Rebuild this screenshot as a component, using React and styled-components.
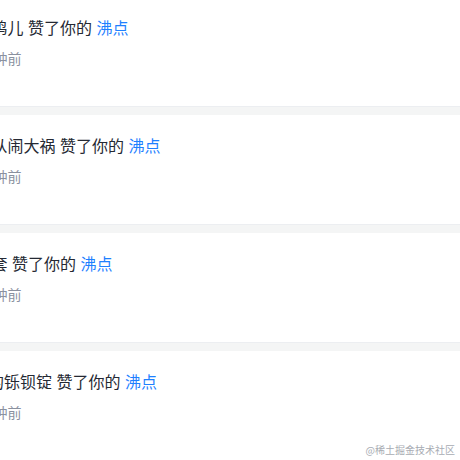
import styled, { createGlobalStyle } from 'styled-components';

const GlobalStyle = createGlobalStyle`
    html, body {
        margin: 0;
        padding: 0;
        background: #ffffff;
    }
    body {
        font-family: "Liberation Sans", "Noto Sans CJK SC", sans-serif;
    }
`

const Viewport = styled.div`
    position: relative;
    width: 460px;
    height: 460px;
    overflow: hidden;
    background: #f4f5f5;
`

const List = styled.ul`
    list-style: none;
    margin: -3px 0 0 -36px;
    padding: 0;
    display: flex;
    flex-direction: column;
    gap: 8px;
`

const Card = styled.li`
    height: 110px;
    box-sizing: border-box;
    padding: 20px 20px 0 0;
    background: #ffffff;
    border-bottom: 1px solid #eceef1;
    display: flex;
    flex-direction: column;
    gap: 8px;
`

const Message = styled.div`
    font-size: 16px;
    line-height: 24px;
    color: #252933;
    white-space: nowrap;
`

const Link = styled.a`
    color: #1e80ff;
    text-decoration: none;
`

const Time = styled.div`
    font-size: 14px;
    line-height: 20px;
    color: #8a919f;
`

const Watermark = styled.span`
    position: absolute;
    right: 5px;
    bottom: 3px;
    font-size: 10px;
    line-height: 14px;
    color: #a8acb3;
    font-family: "Noto Sans CJK SC", sans-serif;
`

const notices = [
    { id: 1, nickname: '小w鸠儿', time: '10分钟前' },
    { id: 2, nickname: '小w从闹大祸', time: '10分钟前' },
    { id: 3, nickname: '小w套', time: '10分钟前' },
    { id: 4, nickname: '小z的铄钡锭', time: '10分钟前' },
];

function App() {
    return (
        <Viewport>
            <GlobalStyle />
            <List>
                {notices.map((n) => (
                    <Card key={n.id}>
                        <Message>
                            {n.nickname} 赞了你的 <Link href="#">沸点</Link>
                        </Message>
                        <Time>{n.time}</Time>
                    </Card>
                ))}
            </List>
            <Watermark>@稀土掘金技术社区</Watermark>
        </Viewport>
    );
}

export default App;
